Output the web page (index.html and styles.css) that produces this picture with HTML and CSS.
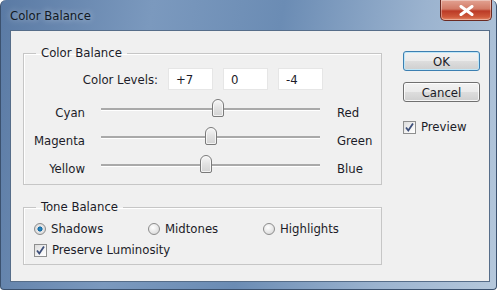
FILE: index.html
```html
<!DOCTYPE html>
<html lang="en">
    <head>
        <meta charset="UTF-8">
        <title>Color Balance</title>
        <link rel="stylesheet" href="styles.css">
    </head>
    <body>
        <div class="window">
            <div class="titlebar">
                <span class="title">Color Balance</span>
                <button class="close" title="Close">
                    <svg width="15" height="11" viewBox="0 0 15 11">
                        <path d="M2 1.5 L13 9.5 M13 1.5 L2 9.5" stroke="#fff" stroke-width="3" stroke-linecap="round"/>
                    </svg>
                </button>
            </div>
            <div class="client">
                <div class="left-col">
                    <fieldset class="group balance">
                        <legend>Color Balance</legend>
                        <div class="levels">
                            <label class="levels-label">Color Levels:</label>
                            <input class="level" type="text" value="+7">
                            <input class="level" type="text" value="0">
                            <input class="level" type="text" value="-4">
                        </div>
                        <div class="slider-row">
                            <span class="side left">Cyan</span>
                            <div class="track">
                                <span class="thumb" style="left: calc(53.5% - 6px)"></span>
                            </div>
                            <span class="side right">Red</span>
                        </div>
                        <div class="slider-row">
                            <span class="side left">Magenta</span>
                            <div class="track">
                                <span class="thumb" style="left: calc(50% - 6px)"></span>
                            </div>
                            <span class="side right">Green</span>
                        </div>
                        <div class="slider-row">
                            <span class="side left">Yellow</span>
                            <div class="track">
                                <span class="thumb" style="left: calc(48% - 6px)"></span>
                            </div>
                            <span class="side right">Blue</span>
                        </div>
                    </fieldset>

                    <fieldset class="group tone">
                        <legend>Tone Balance</legend>
                        <div class="radios">
                            <label class="option shadows"><span class="radio checked"></span>Shadows</label>
                            <label class="option midtones"><span class="radio"></span>Midtones</label>
                            <label class="option"><span class="radio"></span>Highlights</label>
                        </div>
                        <label class="option luminosity">
                            <span class="check">
                                <svg width="11" height="11" viewBox="0 0 11 11"><path d="M2 5.5 L4.3 8.5 L9 1.5" fill="none" stroke="#3d4f7a" stroke-width="1.8"/></svg>
                            </span>Preserve Luminosity
                        </label>
                    </fieldset>
                </div>

                <div class="right-col">
                    <button class="btn default">OK</button>
                    <button class="btn">Cancel</button>
                    <label class="option preview">
                        <span class="check">
                            <svg width="11" height="11" viewBox="0 0 11 11"><path d="M2 5.5 L4.3 8.5 L9 1.5" fill="none" stroke="#3d4f7a" stroke-width="1.8"/></svg>
                        </span>Preview
                    </label>
                </div>
            </div>
        </div>
    </body>
</html>
```

FILE: styles.css
```css
body {
    margin: 0;
    padding: 0;
    background-color: #fff;
    font-family: 'DejaVu Sans Condensed', 'DejaVu Sans', sans-serif;
    font-size: 13px;
    color: #1c1c28;
}

.window {
    width: 497px;
    height: 290px;
    box-sizing: border-box;
    display: flex;
    flex-direction: column;
    padding: 0 6px 7px 9px;
    border-radius: 6px 6px 4px 4px;
    border: 1px solid #3b516e;
    border-top: none;
    background: linear-gradient(100deg, #5a7aa4 0%, #7b99be 28%, #6b8cb4 52%, #9bb3cf 78%, #b5c8dc 100%);
}

.titlebar {
    height: 30px;
    display: flex;
    align-items: flex-start;
    justify-content: space-between;
}

.title {
    font-size: 13px;
    margin-top: 8px;
    color: #121a24;
    text-shadow: 0 0 6px rgba(255, 255, 255, 0.6);
}

.close {
    width: 52px;
    height: 21px;
    margin-right: -2px;
    padding: 0;
    border: 1px solid #6b2a22;
    border-top: none;
    border-radius: 0 0 5px 5px;
    background: linear-gradient(180deg, #e2a292 0%, #d27a66 45%, #bb3a26 55%, #cf5a3c 85%, #e58a6a 100%);
    display: flex;
    align-items: center;
    justify-content: center;
    box-shadow: inset 0 0 0 1px rgba(255, 255, 255, 0.35);
}

.client {
    flex: 1;
    display: flex;
    background-color: #f0f0f0;
    border: 1px solid #566d89;
}

.left-col {
    width: 359px;
    margin-left: 12px;
    padding-top: 14px;
}

.group {
    margin: 0;
    padding: 0;
    border: 1px solid #c6c6c6;
    box-shadow: inset 1px 1px 0 #fff;
}

.group legend {
    margin-left: 12px;
    padding: 0 5px;
    line-height: 16px;
}

.balance {
    height: 140px;
    box-sizing: border-box;
}

.levels {
    display: flex;
    align-items: center;
    margin-top: 7px;
}

.levels-label {
    width: 134px;
    text-align: right;
    margin-right: 10px;
}

.level {
    width: 45px;
    height: 22px;
    box-sizing: border-box;
    margin-right: 10px;
    padding: 0 0 0 7px;
    border: 1px solid #e6e6e6;
    background-color: #fff;
    font: inherit;
    color: #1c1c28;
    outline: none;
}

.slider-row {
    display: flex;
    align-items: center;
    height: 28px;
}

.levels + .slider-row {
    margin-top: 5px;
}

.side {
    margin-top: 6px;
}

.side.left {
    width: 61px;
    text-align: right;
    margin-right: 16px;
}

.side.right {
    margin-left: 17px;
}

.track {
    width: 219px;
    height: 2px;
    position: relative;
    background-color: #a9a9a9;
    border-bottom: 1px solid #fff;
}

.thumb {
    position: absolute;
    top: -9px;
    width: 12px;
    height: 18px;
    box-sizing: border-box;
    border: 1px solid #7a7a7a;
    border-radius: 6px 6px 2px 2px;
    background: linear-gradient(180deg, #f7f7f7 0%, #e2e2e2 50%, #d3d3d3 100%);
    box-shadow: inset 0 0 0 1px rgba(255, 255, 255, 0.7);
}

.tone {
    margin-top: 14px;
    height: 66px;
    box-sizing: border-box;
}

.radios {
    display: flex;
    margin-top: 6px;
}

.option {
    display: flex;
    align-items: center;
    line-height: 16px;
}

.radios .option {
    padding-left: 10px;
}

.shadows {
    width: 104px;
}

.midtones {
    width: 105px;
}

.radio {
    width: 12px;
    height: 12px;
    box-sizing: border-box;
    margin-right: 5px;
    border-radius: 50%;
    border: 1px solid #8c8c8c;
    background: radial-gradient(circle at 40% 35%, #fff 0%, #e4e4e4 60%, #cfcfcf 100%);
}

.radio.checked {
    background: radial-gradient(circle at 50% 50%, #2b90c8 0%, #1467a0 32%, #e8e8e8 40%, #d0d0d0 100%);
}

.check {
    width: 13px;
    height: 13px;
    box-sizing: border-box;
    margin-right: 5px;
    border: 1px solid #8e8f8f;
    background: linear-gradient(135deg, #dcdcdc 0%, #f4f4f4 60%, #fff 100%);
    display: flex;
}

.luminosity {
    padding-left: 10px;
    margin-top: 5px;
}

.right-col {
    display: flex;
    flex-direction: column;
    width: 77px;
    margin-left: 21px;
    padding-top: 20px;
}

.btn {
    height: 20px;
    padding: 0;
    margin-bottom: 11px;
    font: inherit;
    color: #1c1c28;
    border: 1px solid #707070;
    border-radius: 3px;
    background: linear-gradient(180deg, #f2f2f2 0%, #ebebeb 48%, #dddddd 52%, #cfcfcf 100%);
    box-shadow: inset 0 0 0 1px rgba(255, 255, 255, 0.8);
}

.btn.default {
    border-color: #3c7fb1;
    box-shadow: inset 0 0 0 1px #bfe6f7;
}

.preview {
    margin-top: 6px;
}
```
